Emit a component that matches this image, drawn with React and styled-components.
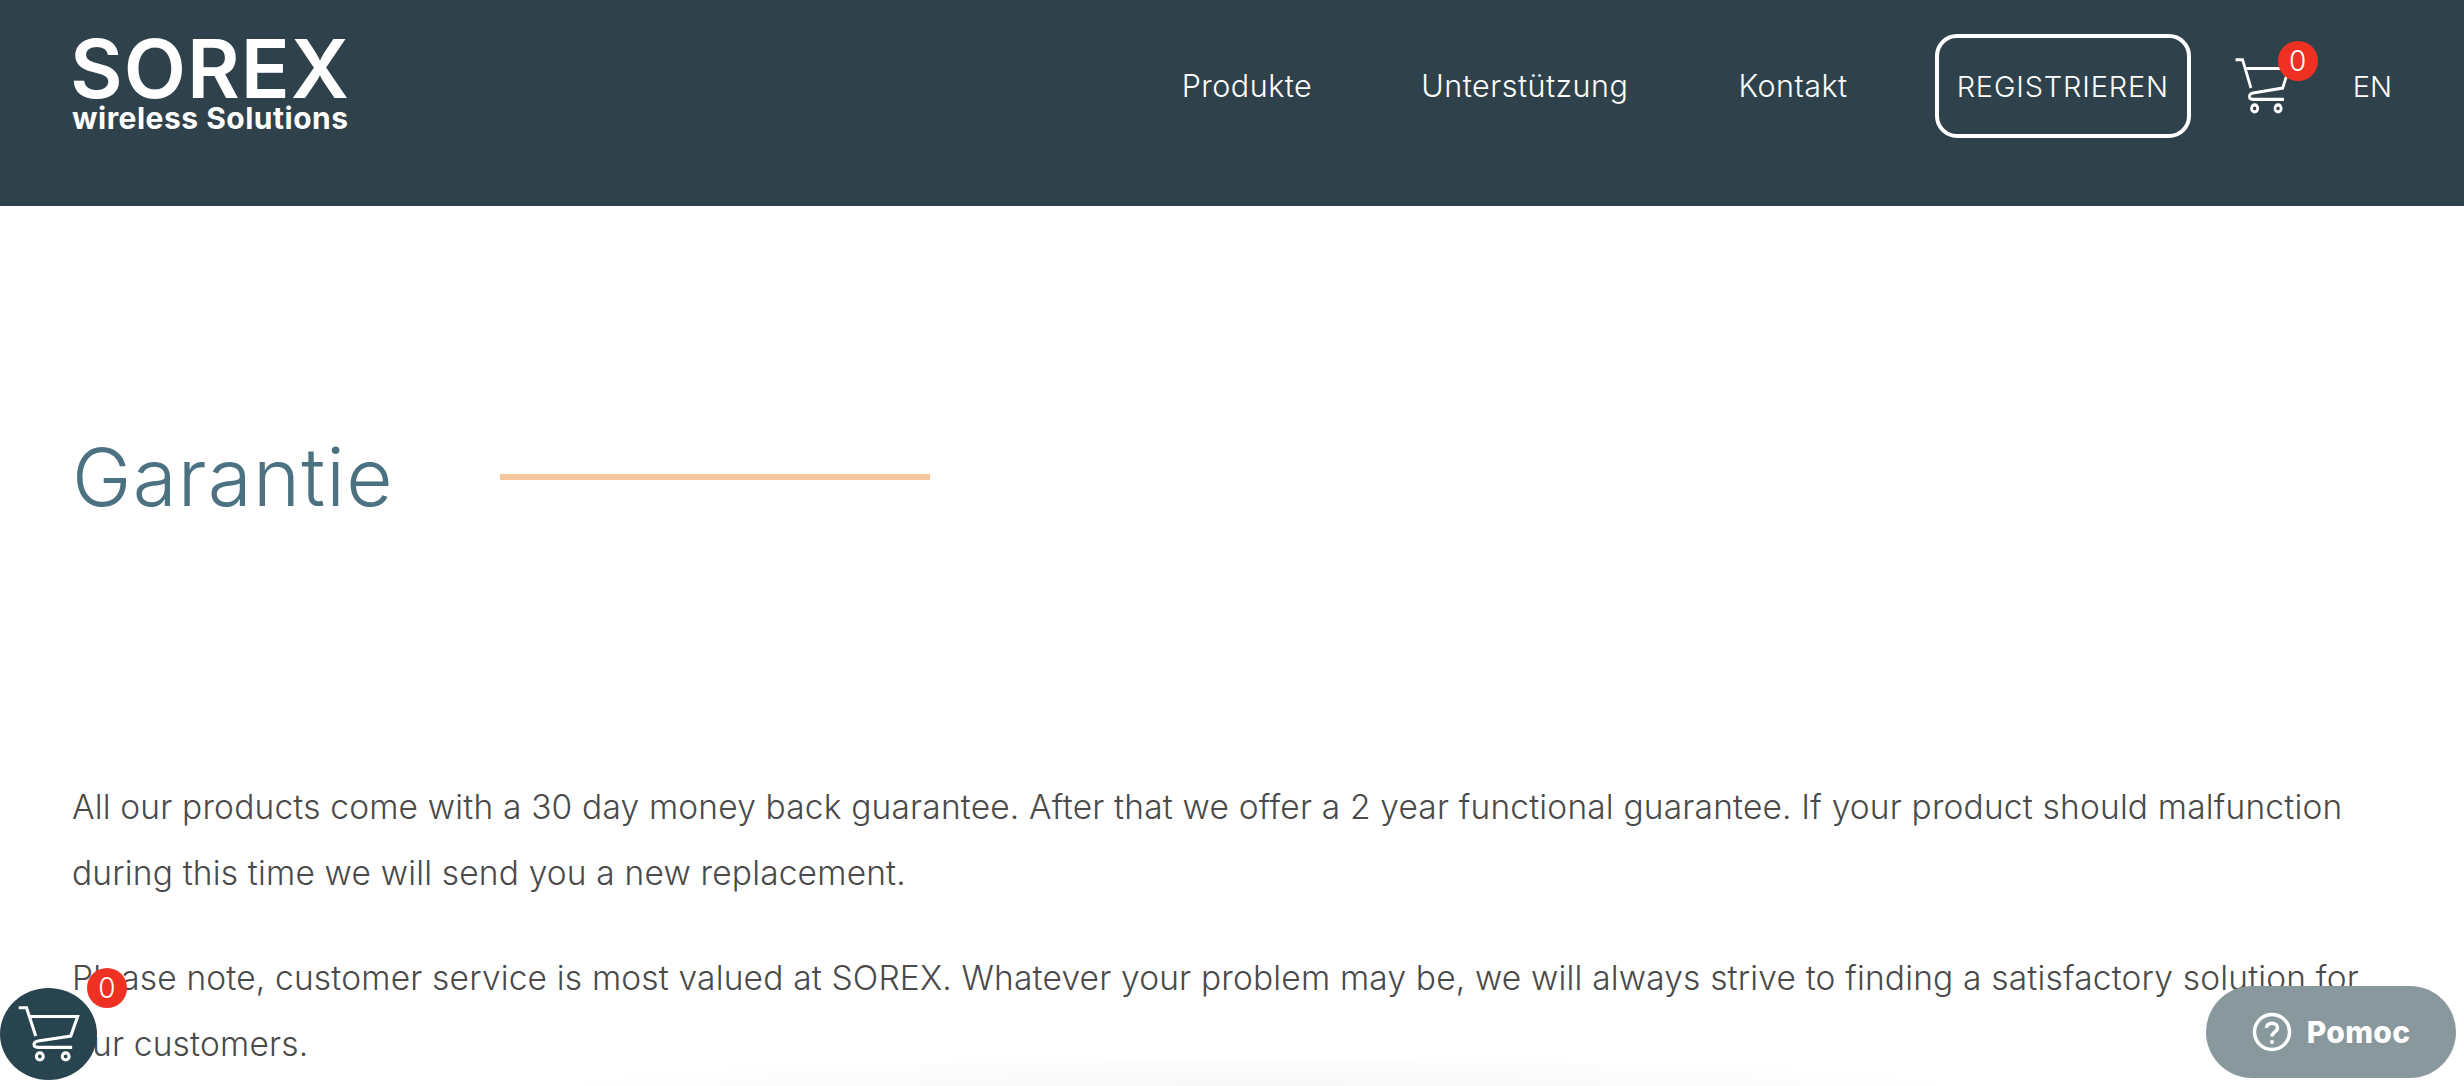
import React from 'react'
import styled, {createGlobalStyle} from 'styled-components'

const GlobalStyle = createGlobalStyle`
    html, body {
        margin: 0;
        height: 100%;
        overflow: hidden;
        background: #fff;
    }
    body {
        font-family: "Inter", "Liberation Sans", sans-serif;
    }
`
const Page = styled.div`
    height: 1086px;
    overflow: hidden;
    position: relative;
`
const Header = styled.header`
    height: 206px;
    box-sizing: border-box;
    background: #2f424b;
    color: #fff;
    padding: 34px 72px 0;
    display: flex;
    justify-content: space-between;
    align-items: flex-start;
`
const Logo = styled.div`
    display: flex;
    flex-direction: column;
    width: 280px;
`
const LogoName = styled.div`
    font-size: 81px;
    font-weight: 600;
    line-height: 62px;
    letter-spacing: 1px;
    margin: 4px 0 0 -2px;
    white-space: nowrap;
`
const LogoTag = styled.div`
    font-size: 30px;
    font-weight: 700;
    letter-spacing: 0.5px;
    line-height: 34px;
    margin-top: 1px;
    white-space: nowrap;
`
const NavArea = styled.nav`
    display: flex;
    align-items: center;
    height: 104px;
`
const NavLink = styled.a`
    font-size: 30.5px;
    font-weight: 270;
    letter-spacing: 0.5px;
    margin: -2px ${props => props.$gap}px 0 0;
    white-space: nowrap;
`
const RegisterBtn = styled.button`
    width: 256px;
    height: 104px;
    box-sizing: border-box;
    border: 4px solid #fff;
    border-radius: 22px;
    background: transparent;
    color: #fff;
    font-family: inherit;
    font-size: 29px;
    font-weight: 270;
    letter-spacing: 0.8px;
    padding: 0;
`
const CartLink = styled.div`
    position: relative;
    display: flex;
    margin: 0 62px 0 43px;
`
const Badge = styled.span`
    position: absolute;
    width: 40px;
    height: 40px;
    border-radius: 50%;
    background: #ef3124;
    color: #fff;
    font-size: 28px;
    font-weight: 300;
    line-height: 40px;
    text-align: center;
`
const HeaderBadge = styled(Badge)`
    top: -17px;
    left: 44px;
`
const Lang = styled.span`
    font-size: 29px;
    font-weight: 270;
`
const Main = styled.main`
    padding: 0 72px;
`
const TitleRow = styled.div`
    display: flex;
    align-items: center;
    gap: 108px;
    height: 96px;
    margin-top: 223px;
`
const Title = styled.h1`
    margin: 0;
    width: 320px;
    font-size: 80px;
    font-weight: 340;
    letter-spacing: 1.2px;
    color: #4c7180;
    line-height: 96px;
    white-space: nowrap;
`
const TitleLine = styled.div`
    width: 430px;
    height: 6px;
    background: #f6c79c;
`
const Text = styled.p`
    margin: 0 0 39px;
    font-size: 33.5px;
    font-weight: 270;
    letter-spacing: 0.18px;
    line-height: 66px;
    color: #4a4a4a;
`
const Content = styled.div`
    margin-top: 249px;
`
const FloatCart = styled.div`
    position: absolute;
    left: 0;
    top: 988px;
    width: 97px;
    height: 92px;
    border-radius: 50%;
    background: #27444f;
    display: flex;
    align-items: center;
    justify-content: center;
`
const FloatBadge = styled(Badge)`
    top: -20px;
    left: 87px;
`
const HelpBtn = styled.div`
    position: absolute;
    left: 2206px;
    top: 986px;
    width: 250px;
    height: 92px;
    border-radius: 46px;
    background: #88989d;
    color: #fff;
    display: flex;
    align-items: center;
    justify-content: center;
    gap: 15px;
    font-size: 30px;
    font-weight: 800;
    letter-spacing: 0.3px;
`
const BottomGlow = styled.div`
    position: absolute;
    left: 550px;
    top: 1056px;
    width: 1420px;
    height: 60px;
    border-radius: 50%;
    background: radial-gradient(closest-side, #f8f8f8, #fcfcfc 70%, #fff);
`

const Cart = ({width, height}) => (
    <svg width={width} height={height} viewBox="50 172 185 160" fill="none" stroke="#fff" strokeWidth="9" preserveAspectRatio="none">
        <path d="M55 177H78L105 258M85 202H228L208 258L112 272C96 275 96 290 112 290H212" />
        <circle cx="117" cy="316" r="10" />
        <circle cx="193" cy="316" r="10" />
    </svg>
)

const HelpIcon = () => (
    <svg width="40" height="40" viewBox="0 0 40 40" fill="none" stroke="#fff">
        <circle cx="20" cy="20" r="17.5" strokeWidth="3.5" />
        <path d="M14.5 16C14.5 9.5 25.5 9.5 25.5 16C25.5 20 20 20 20 24.5" strokeWidth="3.5" />
        <circle cx="20" cy="30" r="2" fill="#fff" stroke="none" />
    </svg>
)

const App = () => {
    return (
        <Page>
            <GlobalStyle />
            <Header>
                <Logo>
                    <LogoName>SOREX</LogoName>
                    <LogoTag>wireless Solutions</LogoTag>
                </Logo>
                <NavArea>
                    <NavLink $gap={109}>Produkte</NavLink>
                    <NavLink $gap={110}>Unterstützung</NavLink>
                    <NavLink $gap={87}>Kontakt</NavLink>
                    <RegisterBtn>REGISTRIEREN</RegisterBtn>
                    <CartLink>
                        <Cart width={57} height={56} />
                        <HeaderBadge>0</HeaderBadge>
                    </CartLink>
                    <Lang>EN</Lang>
                </NavArea>
            </Header>
            <Main>
                <TitleRow>
                    <Title>Garantie</Title>
                    <TitleLine />
                </TitleRow>
                <Content>
                    <Text>All our products come with a 30 day money back guarantee. After that we offer a 2 year functional guarantee. If your product should malfunction during this time we will send you a new replacement.</Text>
                    <Text>Please note, customer service is most valued at SOREX. Whatever your problem may be, we will always strive to finding a satisfactory solution for our customers.</Text>
                </Content>
            </Main>
            <BottomGlow />
            <FloatCart>
                <Cart width={63} height={56} />
                <FloatBadge>0</FloatBadge>
            </FloatCart>
            <HelpBtn>
                <HelpIcon />
                Pomoc
            </HelpBtn>
        </Page>
    )
}

export default App
